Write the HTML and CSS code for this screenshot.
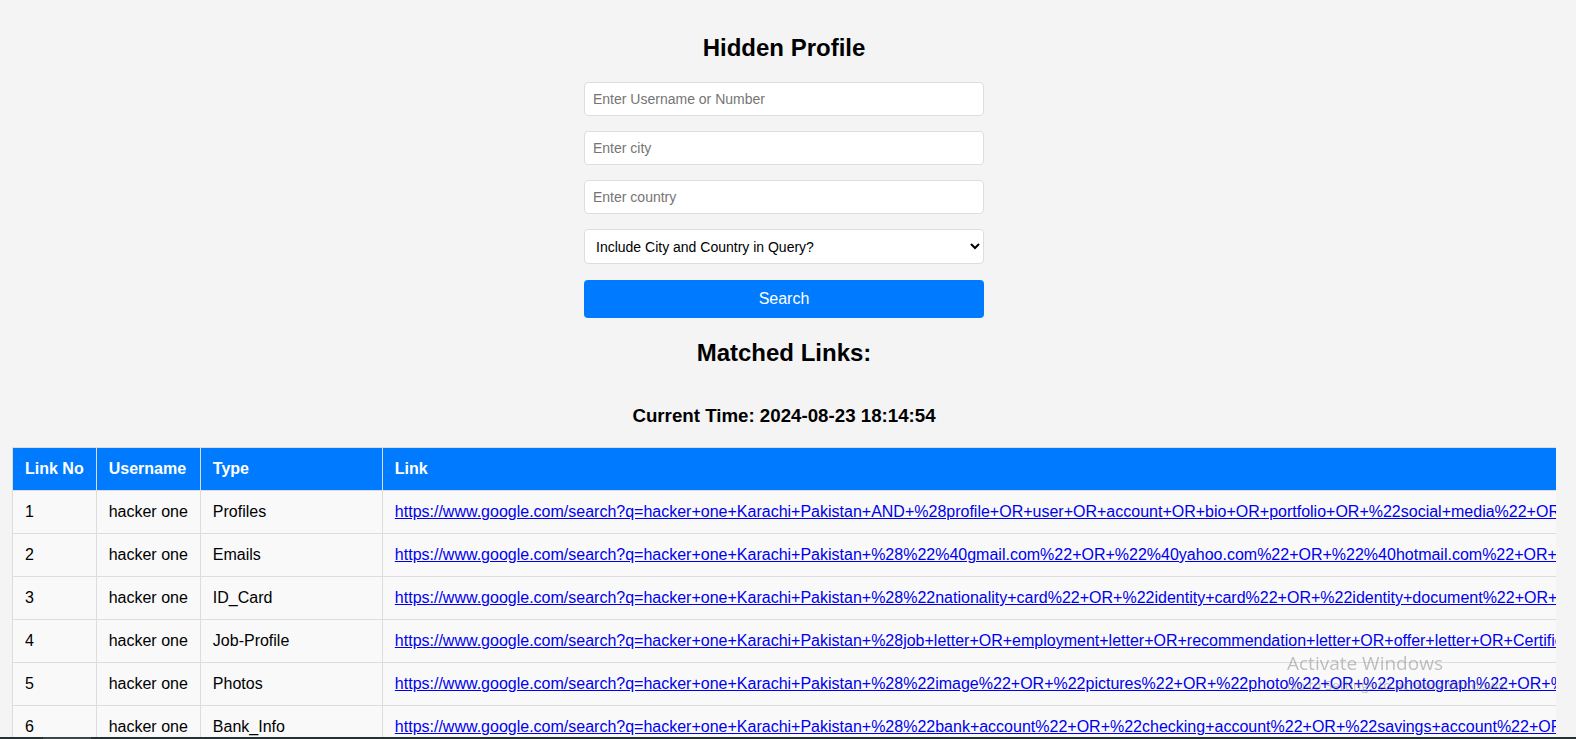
FILE: index.html
```html
<!DOCTYPE html>
<html lang="en">
<head>
<meta charset="utf-8">
<title>Hidden Profile</title>
<link rel="stylesheet" href="styles.css">
</head>
<body>
  <div class="search">
    <h2 class="title">Hidden Profile</h2>
    <input class="field" type="text" placeholder="Enter Username or Number">
    <input class="field" type="text" placeholder="Enter city">
    <input class="field" type="text" placeholder="Enter country">
    <select class="field select">
      <option>Include City and Country in Query?</option>
      <option>Yes</option>
      <option>No</option>
    </select>
    <button class="btn" type="button">Search</button>
  </div>

  <div class="results">
    <h2 class="results-title">Matched Links:</h2>
    <h3 class="time">Current Time: 2024-08-23 18:14:54</h3>
    <div class="table-wrap">
      <table class="links">
        <thead>
          <tr>
            <th class="c-no">Link No</th>
            <th class="c-user">Username</th>
            <th class="c-type">Type</th>
            <th class="c-link">Link</th>
          </tr>
        </thead>
        <tbody>
          <tr>
            <td>1</td><td>hacker one</td><td>Profiles</td>
            <td><a href="#">https://www.google.com/search?q=hacker+one+Karachi+Pakistan+AND+%28profile+OR+user+OR+account+OR+bio+OR+portfolio+OR+%22social+media%22+OR+%22about+me%22%29</a></td>
          </tr>
          <tr>
            <td>2</td><td>hacker one</td><td>Emails</td>
            <td><a href="#">https://www.google.com/search?q=hacker+one+Karachi+Pakistan+%28%22%40gmail.com%22+OR+%22%40yahoo.com%22+OR+%22%40hotmail.com%22+OR+%22%40outlook.com%22%29</a></td>
          </tr>
          <tr>
            <td>3</td><td>hacker one</td><td>ID_Card</td>
            <td><a href="#">https://www.google.com/search?q=hacker+one+Karachi+Pakistan+%28%22nationality+card%22+OR+%22identity+card%22+OR+%22identity+document%22+OR+%22passport%22%29</a></td>
          </tr>
          <tr>
            <td>4</td><td>hacker one</td><td>Job-Profile</td>
            <td><a href="#">https://www.google.com/search?q=hacker+one+Karachi+Pakistan+%28job+letter+OR+employment+letter+OR+recommendation+letter+OR+offer+letter+OR+Certificate%29</a></td>
          </tr>
          <tr>
            <td>5</td><td>hacker one</td><td>Photos</td>
            <td><a href="#">https://www.google.com/search?q=hacker+one+Karachi+Pakistan+%28%22image%22+OR+%22pictures%22+OR+%22photo%22+OR+%22photograph%22+OR+%22selfie%22%29</a></td>
          </tr>
          <tr>
            <td>6</td><td>hacker one</td><td>Bank_Info</td>
            <td><a href="#">https://www.google.com/search?q=hacker+one+Karachi+Pakistan+%28%22bank+account%22+OR+%22checking+account%22+OR+%22savings+account%22+OR+%22IBAN%22%29</a></td>
          </tr>
        </tbody>
      </table>
    </div>
  </div>

  <div class="watermark">
    <div class="wm-title">Activate Windows</div>
    <div class="wm-sub">Go to Settings to activate Windows.</div>
  </div>
  <div class="taskbar"><span class="taskbar-thumb"></span></div>
</body>
</html>
```

FILE: styles.css
```css
html, body {
  height: 100%;
}

body {
  margin: 0;
  padding: 0 16px 0 8px;
  background: #f4f4f4;
  font-family: "Liberation Sans", Arial, sans-serif;
  color: #000;
  overflow: hidden;
}

.search {
  width: 400px;
  margin: 0 auto;
  padding-top: 34px;
  display: flex;
  flex-direction: column;
}

.title {
  margin: 0 0 20px;
  font-size: 24px;
  font-weight: bold;
  text-align: center;
  line-height: normal;
}

.field {
  box-sizing: border-box;
  width: 400px;
  height: 34px;
  margin: 0 0 15px;
  padding: 8px;
  border: 1px solid #ddd;
  border-radius: 4px;
  background: #fff;
  font-family: "Liberation Sans", Arial, sans-serif;
  font-size: 14px;
  color: #000;
  outline: none;
}

.field::placeholder {
  color: #757575;
}

.select {
  height: 35px;
  margin-bottom: 16px;
  font-size: 14px;
  padding: 0 4px 0 7px;
}

.btn {
  box-sizing: border-box;
  width: 400px;
  height: 38px;
  padding: 10px;
  border: none;
  border-radius: 4px;
  background: #007bff;
  color: #fff;
  font-family: "Liberation Sans", Arial, sans-serif;
  font-size: 16px;
  cursor: pointer;
}

.results {
  display: flex;
  flex-direction: column;
}

.results-title {
  margin: 21px 0 38px;
  font-size: 24px;
  font-weight: bold;
  text-align: center;
  line-height: normal;
}

.time {
  margin: 0 0 20px;
  font-size: 18.72px;
  font-weight: bold;
  text-align: center;
  line-height: normal;
}

.table-wrap {
  margin: 0 4px;
  overflow: hidden;
}

.links {
  border-collapse: collapse;
  width: max-content;
  background: #f9f9f9;
  font-size: 16px;
}

.links th,
.links td {
  border: 1px solid #ddd;
  padding: 12px;
  text-align: left;
  white-space: nowrap;
  line-height: 18px;
}

.links th {
  background: #007bff;
  color: #fff;
  font-weight: bold;
}

.c-no { width: 58px; }
.c-user { width: 78px; }
.c-type { width: 157px; }

.links a {
  color: #0000ee;
  text-decoration: underline;
}

.watermark {
  position: fixed;
  left: 1287px;
  top: 651px;
  color: rgba(120, 120, 120, 0.45);
  font-family: "Open Sans", "Noto Sans", sans-serif;
  pointer-events: none;
}

.wm-title {
  font-size: 19px;
  line-height: 24px;
}

.wm-sub {
  font-size: 13.5px;
  line-height: 20px;
}

.taskbar {
  position: fixed;
  left: 0;
  right: 0;
  bottom: 0;
  height: 2px;
  background: #263232;
}

.taskbar-thumb {
  display: block;
  margin-left: 43px;
  width: 48px;
  height: 2px;
  background: #3c4848;
}
```
